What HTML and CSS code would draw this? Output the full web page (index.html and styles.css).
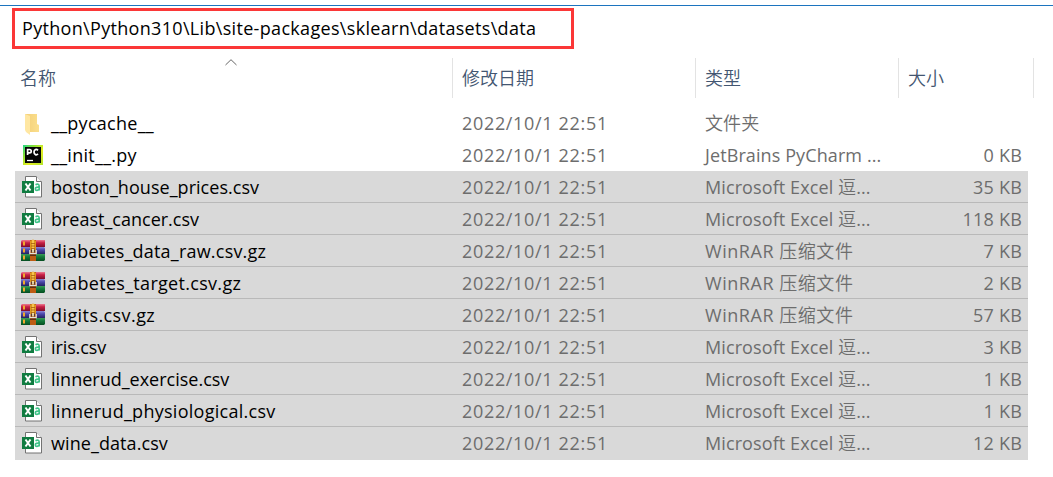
FILE: index.html
```html
<!DOCTYPE html>
<html lang="zh-CN">
<head>
<meta charset="utf-8">
<title>data</title>
<link rel="stylesheet" href="styles.css">
</head>
<body>
<svg class="defs" width="0" height="0">
  <linearGradient id="pcg" x1="0" y1="0" x2="1" y2="1"><stop offset="0" stop-color="#21d789"/><stop offset=".3" stop-color="#8be234"/><stop offset=".6" stop-color="#e4ee25"/><stop offset="1" stop-color="#b5e629"/></linearGradient>
  <linearGradient id="fold" x1="0" y1="0" x2="1" y2="0"><stop offset="0" stop-color="#f3cf78"/><stop offset="1" stop-color="#fbdf8d"/></linearGradient>
  <linearGradient id="red" x1="0" y1="0" x2="0" y2="1"><stop offset="0" stop-color="#ec7c92"/><stop offset=".4" stop-color="#c81f45"/><stop offset="1" stop-color="#7d0d2b"/></linearGradient>
  <linearGradient id="blue" x1="0" y1="0" x2="0" y2="1"><stop offset="0" stop-color="#8d86d6"/><stop offset=".4" stop-color="#4c48ac"/><stop offset="1" stop-color="#242161"/></linearGradient>
  <linearGradient id="green" x1="0" y1="0" x2="0" y2="1"><stop offset="0" stop-color="#3c9b58"/><stop offset=".4" stop-color="#147b3a"/><stop offset="1" stop-color="#064d21"/></linearGradient>
  <symbol id="folder" viewBox="0 0 24 24">
    <path d="M4 3h12v10l2 1v7H8z" fill="url(#fold)"/>
    <path d="M4 3l5 2v19l-4-3-1-2z" fill="#ffe7a2"/>
  </symbol>
  <symbol id="pycharm" viewBox="0 0 24 24">
    <path d="M2 2h20v20H2z" fill="url(#pcg)"/><path d="M4 4h16v16H4z" fill="#050505"/>
    <path d="M6.600 12V6.500h2a1.600 1.600 0 0 1 0 3.300H6.600M17 7.300c-1.500-1.600-4-.9-4 1.800s2.500 3.400 4 1.800" fill="none" stroke="#fff" stroke-width="1.700"/><path d="M6 17.500h6" stroke="#fff" stroke-width="1.300"/>
  </symbol>
  <symbol id="csv" viewBox="0 0 24 24">
    <path d="M4.500 1.500H15l5.500 5.500v15h-16z" fill="#fff" stroke="#737373"/><path d="M15.500 1.500V6.500h5" fill="#f5f5f5" stroke="#737373"/>
    <path d="M1 6h12v12H1z" fill="#107c41"/><path d="M4.500 8.500l5 7m0-7l-5 7" stroke="#fff" stroke-width="2"/>
    <path d="M14.500 9.700c2.200-1.200 3.700-.6 3.700 1.400v4.400m0-3.300c-2-.2-3.900.1-3.900 1.700 0 2 2.900 1.900 3.900.1" fill="none" stroke="#3fc489" stroke-width="1.600"/>
  </symbol>
  <symbol id="rar" viewBox="0 0 24 24">
    <path d="M0 2l1-1h23v7H0z" fill="url(#red)"/><path d="M0 8h23l1 1v6H0z" fill="url(#blue)"/><path d="M0 15h24v6l-1 1H0z" fill="url(#green)"/>
    <path d="M3 2.500v4m0 3v4m0 3v4" stroke="#f1a92d" stroke-width="2"/>
    <path d="M9 1h6v21H9z" fill="#bd5c14"/><path d="M9 2l3-1.500L15 2v9H9z" fill="#dd971f"/><path d="M11 1h2v10h-2z" fill="#f6c44d"/>
    <path d="M10 4.500h4m-4 2.500h4m-4 2.500h4" stroke="#a65d10" stroke-width=".8"/>
    <path d="M8.800 11v3.700h6.400V11" fill="none" stroke="#e5e1dc" stroke-width="1.300"/><path d="M10 10.500h4v3h-4z" fill="#5c3b2b"/><path d="M11.200 10h1.600v3.500h-1.600z" fill="#fff2c1"/><path d="M9 15.500h6v1.500H9z" fill="#5e2d15"/>
  </symbol>
</svg>
<div class="topline"></div>
<div class="path"><span>Python\Python310\Lib\site-packages\sklearn\datasets\data</span></div>
<div class="head">
  <div class="h name"><span>名称</span><svg class="sort" viewBox="0 0 12 7"><path d="M.5 6L6 .7 11.500 6" fill="none" stroke="#666"/></svg></div>
  <div class="h">修改日期</div><div class="h">类型</div><div class="h">大小</div>
</div>
<div class="list">
  <div class="row"><svg class="icon"><use href="#folder"/></svg><span class="file f0">__pycache__</span><span class="date">2022/10/1 22:51</span><span class="type"><i>文件夹</i></span><span class="size"></span></div>
  <div class="row"><svg class="icon"><use href="#pycharm"/></svg><span class="file f1">__init__.py</span><span class="date">2022/10/1 22:51</span><span class="type">JetBrains PyCharm ...</span><span class="size">0 KB</span></div>
  <div class="row sel"><svg class="icon"><use href="#csv"/></svg><span class="file f2">boston_house_prices.csv</span><span class="date">2022/10/1 22:51</span><span class="type">Microsoft Excel <i>逗</i>...</span><span class="size">35 KB</span></div>
  <div class="row sel"><svg class="icon"><use href="#csv"/></svg><span class="file f3">breast_cancer.csv</span><span class="date">2022/10/1 22:51</span><span class="type">Microsoft Excel <i>逗</i>...</span><span class="size">118 KB</span></div>
  <div class="row sel"><svg class="icon"><use href="#rar"/></svg><span class="file f4">diabetes_data_raw.csv.gz</span><span class="date">2022/10/1 22:51</span><span class="type rar">WinRAR <i>压缩文件</i></span><span class="size">7 KB</span></div>
  <div class="row sel"><svg class="icon"><use href="#rar"/></svg><span class="file f5">diabetes_target.csv.gz</span><span class="date">2022/10/1 22:51</span><span class="type rar">WinRAR <i>压缩文件</i></span><span class="size">2 KB</span></div>
  <div class="row sel"><svg class="icon"><use href="#rar"/></svg><span class="file f6">digits.csv.gz</span><span class="date">2022/10/1 22:51</span><span class="type rar">WinRAR <i>压缩文件</i></span><span class="size">57 KB</span></div>
  <div class="row sel"><svg class="icon"><use href="#csv"/></svg><span class="file f7">iris.csv</span><span class="date">2022/10/1 22:51</span><span class="type">Microsoft Excel <i>逗</i>...</span><span class="size">3 KB</span></div>
  <div class="row sel"><svg class="icon"><use href="#csv"/></svg><span class="file f8">linnerud_exercise.csv</span><span class="date">2022/10/1 22:51</span><span class="type">Microsoft Excel <i>逗</i>...</span><span class="size">1 KB</span></div>
  <div class="row sel"><svg class="icon"><use href="#csv"/></svg><span class="file f9">linnerud_physiological.csv</span><span class="date">2022/10/1 22:51</span><span class="type">Microsoft Excel <i>逗</i>...</span><span class="size">1 KB</span></div>
  <div class="row sel"><svg class="icon"><use href="#csv"/></svg><span class="file f10">wine_data.csv</span><span class="date">2022/10/1 22:51</span><span class="type">Microsoft Excel <i>逗</i>...</span><span class="size">12 KB</span></div>
</div>
</body>
</html>
```
FILE: styles.css
```css
* { box-sizing: border-box; }
body { margin: 0; width: 1053px; height: 477px; overflow: hidden; background: #fff; color: #000; font: 18px/32px "Open Sans", "Noto Sans CJK SC", sans-serif; white-space: nowrap; }
.defs { display: block; position: absolute; }
.topline { height: 1px; margin-top: 5px; background: #1c74bf; }
.path { width: 562px; height: 41px; margin: 2px 0 0 12px; padding-left: 7px; border: 3px solid #fb3737; line-height: 35px; letter-spacing: .32px; }
.head { display: grid; grid-template-columns: 453px 243px 203px 135px; height: 40px; margin-top: 9px; color: #435671; font-weight: 350; line-height: 40px; }
.h { border-right: 1px solid #e3e3e3; padding-left: 9px; }
.h.name { position: relative; padding-left: 20px; }
.sort { position: absolute; left: 225px; top: 1px; width: 12px; height: 7px; }
.list { margin: 9px 0 0 15px; width: 1013px; }
.row { display: grid; grid-template-columns: 36px 411px 243px 190px 127px; height: 32px; align-items: center; color: #6d6d6d; }
.sel { background: #d9d9d9; border-bottom: 1px solid #b9b9b9; }
.row:last-child { border-bottom-color: #d9d9d9; height: 33px; }
.icon { width: 24px; height: 24px; margin-left: 6px; }
.file { color: #000; }
.f0, .f1, .f9 { letter-spacing: .28px; }
.f2 { letter-spacing: .04px; }
.f4 { letter-spacing: .21px; }
.f5 { letter-spacing: .3px; }
.f6 { letter-spacing: .42px; }
.f7 { letter-spacing: -.1px; }
.f10 { letter-spacing: .08px; }
.date { letter-spacing: .67px; }
.type { letter-spacing: .1px; }
.type i { font-style: normal; font-weight: 350; }
.type.rar { letter-spacing: .54px; }
.size { text-align: right; letter-spacing: .2px; }
.row span { line-height: 30px; }
```
